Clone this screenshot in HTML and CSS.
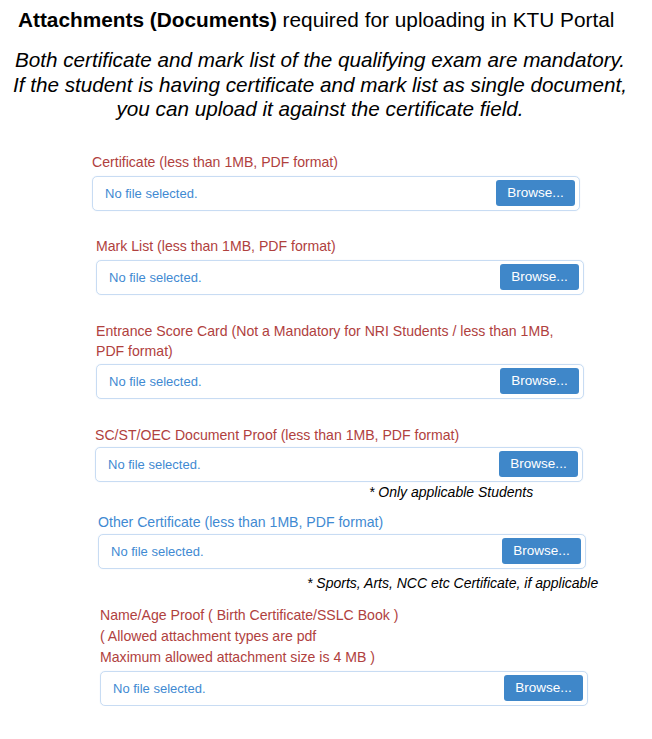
FILE: index.html
```html
<!DOCTYPE html>
<html>
<head>
<meta charset="utf-8">
<link rel="stylesheet" href="styles.css">
</head>
<body>
<div class="page">
  <h1 class="title"><b>Attachments (Documents)</b> required for uploading in KTU Portal</h1>
  <p class="intro">Both certificate and mark list of the qualifying exam are mandatory.<br>If the student is having certificate and mark list as single document,<br>you can upload it against the certificate field.</p>

  <div class="field f1">
    <div class="label red">Certificate (less than 1MB, PDF format)</div>
    <div class="file"><span class="empty">No file selected.</span><span class="btn">Browse...</span></div>
  </div>

  <div class="field f2">
    <div class="label red">Mark List (less than 1MB, PDF format)</div>
    <div class="file"><span class="empty">No file selected.</span><span class="btn">Browse...</span></div>
  </div>

  <div class="field f3">
    <div class="label red">Entrance Score Card (Not a Mandatory for NRI Students / less than 1MB, PDF format)</div>
    <div class="file"><span class="empty">No file selected.</span><span class="btn">Browse...</span></div>
  </div>

  <div class="field f4">
    <div class="label red">SC/ST/OEC Document Proof (less than 1MB, PDF format)</div>
    <div class="file"><span class="empty">No file selected.</span><span class="btn">Browse...</span></div>
    <div class="note n4">* Only applicable Students</div>
  </div>

  <div class="field f5">
    <div class="label blue">Other Certificate (less than 1MB, PDF format)</div>
    <div class="file"><span class="empty">No file selected.</span><span class="btn">Browse...</span></div>
    <div class="note n5">* Sports, Arts, NCC etc Certificate, if applicable</div>
  </div>

  <div class="field f6">
    <div class="label red tall">Name/Age Proof ( Birth Certificate/SSLC Book )<br>( Allowed attachment types are pdf<br>Maximum allowed attachment size is 4 MB )</div>
    <div class="file"><span class="empty">No file selected.</span><span class="btn">Browse...</span></div>
  </div>
</div>
</body>
</html>
```

FILE: styles.css
```css
html, body {
  margin: 0;
  padding: 0;
  background: #ffffff;
}
.page {
  width: 652px;
  font-family: "Liberation Sans", Arial, sans-serif;
  color: #000;
}
.title {
  margin: 0;
  padding-top: 8px;
  padding-left: 18px;
  font-size: 20.8px;
  font-weight: normal;
  line-height: 24px;
  white-space: nowrap;
}
.title b {
  font-weight: bold;
}
.intro {
  margin: 16px 0 0 0;
  padding-right: 12px;
  text-align: center;
  font-style: italic;
  font-size: 20.7px;
  line-height: 24.5px;
  white-space: nowrap;
}
.field {
  width: 488px;
}
.f1 { margin: 30px 0 0 92px; }
.f2 { margin: 25px 0 0 96px; }
.f3 { margin: 26px 0 0 96px; }
.f4 { margin: 26px 0 0 95px; }
.f5 { margin: 10px 0 0 98px; }
.f6 { margin: 12px 0 0 100px; }
.label {
  font-size: 14.1px;
  line-height: 20px;
  height: 20px;
  margin-bottom: 4px;
  white-space: nowrap;
}
.f3 .label {
  white-space: normal;
  height: auto;
  width: 470px;
  margin-bottom: 3px;
}
.f4 .label, .f5 .label { margin-bottom: 2px; }
.label.tall {
  height: auto;
  line-height: 21px;
  margin-bottom: 3px;
}
.red { color: #b0413e; }
.blue { color: #3f8ad2; }
.file {
  box-sizing: border-box;
  height: 35px;
  border: 1px solid #c8dcf3;
  border-radius: 5px;
  box-shadow: 0 0 1px rgba(150, 190, 235, 0.4);
  display: flex;
  align-items: center;
  justify-content: space-between;
  padding: 0 4px 0 12px;
}
.empty {
  color: #3f8ad2;
  font-size: 13px;
}
.btn {
  background: #3f87c9;
  color: #fff;
  font-size: 13.5px;
  width: 79px;
  height: 26px;
  line-height: 26px;
  text-align: center;
  border-radius: 3px;
  box-sizing: border-box;
}
.note {
  font-style: italic;
  font-size: 14px;
  line-height: 20px;
  white-space: nowrap;
}
.n4 { padding-left: 274px; }
.n5 { padding-left: 209px; margin-top: 4px; }
```
